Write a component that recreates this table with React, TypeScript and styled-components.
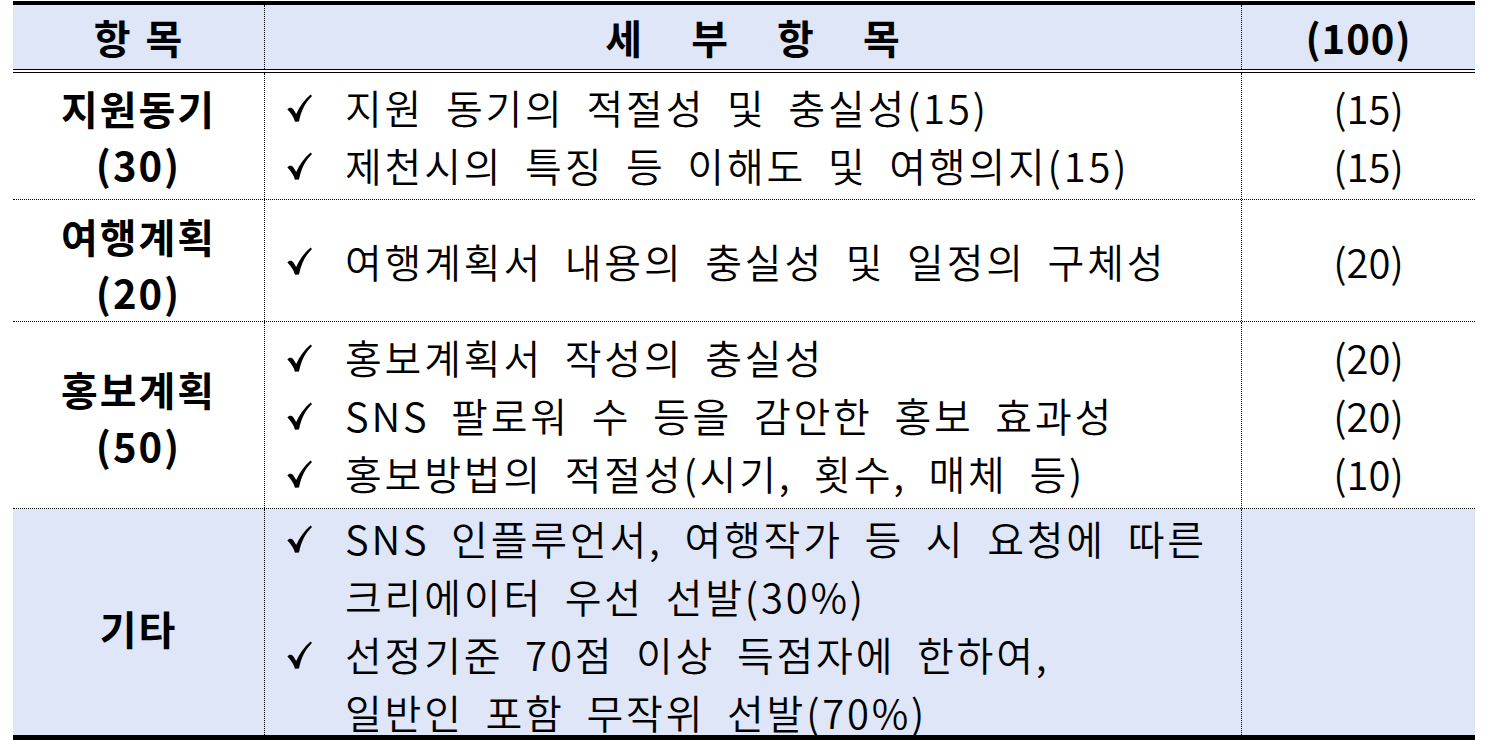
import styled, { createGlobalStyle } from 'styled-components'

const GlobalStyle = createGlobalStyle`
  html, body {
    margin: 0;
    padding: 0;
    background: #fff;
  }
  body {
    font-family: "Noto Sans CJK KR", "Noto Sans", sans-serif;
    color: #000;
  }
`

const BLUE = '#dee6f7'

const Table = styled.div`
  margin: 1px 0 0 13px;
  width: 1462px;
  border-top: 4px solid #000;
  border-bottom: 5px solid #000;
  font-size: 40px;
  line-height: 58px;
`

const HeadRow = styled.div`
  display: grid;
  grid-template-columns: 251px 977px 1fr;
  height: 64px;
  background: ${BLUE};
`

const HeadCell = styled.div<{ $divider?: boolean; $spacing?: number }>`
  display: flex;
  align-items: center;
  justify-content: center;
  font-weight: 700;
  white-space: pre;
  letter-spacing: 1px;
  word-spacing: ${(p) => p.$spacing ?? 0}px;
  border-left: ${(p) => (p.$divider ? '1px dotted #000' : 'none')};
`

const DoubleRule = styled.div`
  height: 2px;
  border-top: 1px solid #000;
  border-bottom: 1px solid #000;
`

const Row = styled.div<{ $height: number; $shaded?: boolean; $last?: boolean }>`
  display: grid;
  grid-template-columns: 251px 977px 1fr;
  box-sizing: border-box;
  height: ${(p) => p.$height}px;
  background: ${(p) => (p.$shaded ? BLUE : 'transparent')};
  border-bottom: ${(p) => (p.$last ? 'none' : '1px dotted #000')};
`

const TitleCell = styled.div<{ $shift?: number }>`
  display: flex;
  flex-direction: column;
  align-items: center;
  justify-content: center;
  font-weight: 700;
  letter-spacing: 2px;
  line-height: 56px;
  padding-top: ${(p) => p.$shift ?? 0}px;
`

const ItemCell = styled.div<{ $top?: boolean }>`
  display: flex;
  flex-direction: column;
  justify-content: ${(p) => (p.$top ? 'flex-start' : 'center')};
  padding-left: 22px;
  border-left: 1px dotted #000;
  white-space: nowrap;
`

const Item = styled.div`
  display: flex;
`

const Mark = styled.span`
  flex: none;
  width: 58px;
  height: 58px;
  display: flex;
  align-items: center;

  svg {
    display: block;
    margin-top: 1px;
  }
`

const ItemText = styled.span`
  font-weight: 350;
  letter-spacing: 2.8px;
  word-spacing: 10px;
`

const ScoreCell = styled.div`
  display: flex;
  flex-direction: column;
  align-items: center;
  justify-content: center;
  padding-left: 20px;
  font-weight: 350;
  border-left: 1px dotted #000;
`

function CheckMark() {
  return (
    <svg width="25" height="28" viewBox="0 0 25 28" aria-hidden="true">
      <path
        d="M0.4 15.4 C2 13.4 4.8 13.2 6.6 15.8 L9.2 20 C12.6 12.4 17.2 5.8 23.6 0.4 L25 1.9 C18.6 8.2 14.4 15.8 12 27.6 L8 27.7 C6.6 23 4 18.8 0.4 15.4 Z"
        fill="#000"
      />
    </svg>
  )
}

interface Section {
  title: string[]
  items: string[][]
  scores: string[]
  height: number
  shaded?: boolean
  shift?: number
}

const sections: Section[] = [
  {
    title: ['지원동기', '(30)'],
    items: [['지원 동기의 적절성 및 충실성(15)'], ['제천시의 특징 등 이해도 및 여행의지(15)']],
    scores: ['(15)', '(15)'],
    height: 127,
  },
  {
    title: ['여행계획', '(20)'],
    items: [['여행계획서 내용의 충실성 및 일정의 구체성']],
    scores: ['(20)'],
    height: 122,
    shift: 6,
  },
  {
    title: ['홍보계획', '(50)'],
    items: [
      ['홍보계획서 작성의 충실성'],
      ['SNS 팔로워 수 등을 감안한 홍보 효과성'],
      ['홍보방법의 적절성(시기, 횟수, 매체 등)'],
    ],
    scores: ['(20)', '(20)', '(10)'],
    height: 187,
    shift: 4,
  },
  {
    title: ['기타'],
    items: [
      ['SNS 인플루언서, 여행작가 등 시 요청에 따른', '크리에이터 우선 선발(30%)'],
      ['선정기준 70점 이상 득점자에 한하여,', '일반인 포함 무작위 선발(70%)'],
    ],
    scores: [],
    height: 226,
    shaded: true,
    shift: 6,
  },
]

export default function App() {
  return (
    <>
      <GlobalStyle />
      <Table>
        <HeadRow>
          <HeadCell $spacing={4}>항 목</HeadCell>
          <HeadCell $divider $spacing={38}>세 부 항 목</HeadCell>
          <HeadCell $divider>(100)</HeadCell>
        </HeadRow>
        <DoubleRule />
        {sections.map((s, i) => (
          <Row key={s.title[0]} $height={s.height} $shaded={s.shaded} $last={i === sections.length - 1}>
            <TitleCell $shift={s.shift}>
              {s.title.map((t) => (
                <div key={t}>{t}</div>
              ))}
            </TitleCell>
            <ItemCell $top={s.shaded}>
              {s.items.map((lines) => (
                <Item key={lines[0]}>
                  <Mark>
                    <CheckMark />
                  </Mark>
                  <ItemText>
                    {lines.map((l, j) => (
                      <div key={j}>{l}</div>
                    ))}
                  </ItemText>
                </Item>
              ))}
            </ItemCell>
            <ScoreCell>
              {s.scores.map((sc, j) => (
                <div key={j}>{sc}</div>
              ))}
            </ScoreCell>
          </Row>
        ))}
      </Table>
    </>
  )
}
